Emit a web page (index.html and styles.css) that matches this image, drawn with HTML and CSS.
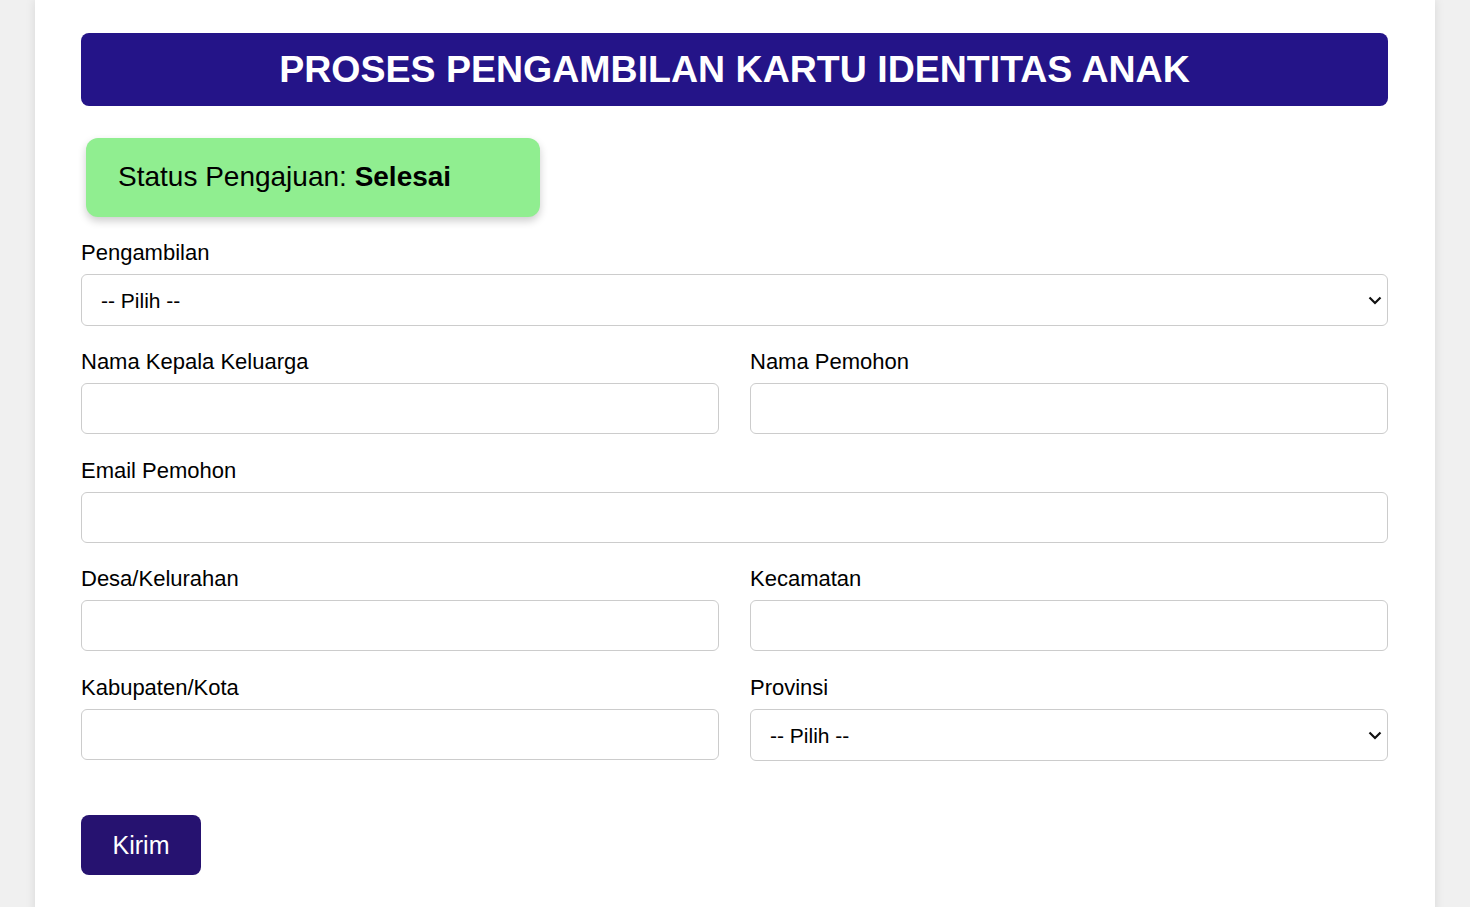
FILE: index.html
```html
<!DOCTYPE html>
<html lang="id">
<head>
<meta charset="utf-8">
<title>Proses Pengambilan Kartu Identitas Anak</title>
<link rel="stylesheet" href="styles.css">
</head>
<body>
<div class="container">
  <h1 class="title">PROSES PENGAMBILAN KARTU IDENTITAS ANAK</h1>
  <div class="status">Status Pengajuan:&nbsp;<strong>Selesai</strong></div>
  <form class="form">
    <div class="field field-first">
      <label for="pengambilan">Pengambilan</label>
      <div class="select">
        <select id="pengambilan"><option>-- Pilih --</option></select>
        <svg class="chevron" width="14" height="9" viewBox="0 0 14 9"><path d="M1.5 1.5 L7 7 L12.5 1.5" fill="none" stroke="#111" stroke-width="2.2"/></svg>
      </div>
    </div>
    <div class="row">
      <div class="field">
        <label for="kk">Nama Kepala Keluarga</label>
        <input id="kk" type="text">
      </div>
      <div class="field">
        <label for="pemohon">Nama Pemohon</label>
        <input id="pemohon" type="text">
      </div>
    </div>
    <div class="field">
      <label for="email">Email Pemohon</label>
      <input id="email" type="email">
    </div>
    <div class="row">
      <div class="field">
        <label for="desa">Desa/Kelurahan</label>
        <input id="desa" type="text">
      </div>
      <div class="field">
        <label for="kec">Kecamatan</label>
        <input id="kec" type="text">
      </div>
    </div>
    <div class="row">
      <div class="field">
        <label for="kab">Kabupaten/Kota</label>
        <input id="kab" type="text">
      </div>
      <div class="field">
        <label for="prov">Provinsi</label>
        <div class="select">
          <select id="prov"><option>-- Pilih --</option></select>
          <svg class="chevron" width="14" height="9" viewBox="0 0 14 9"><path d="M1.5 1.5 L7 7 L12.5 1.5" fill="none" stroke="#111" stroke-width="2.2"/></svg>
        </div>
      </div>
    </div>
    <button type="button" class="submit">Kirim</button>
  </form>
</div>
</body>
</html>
```
FILE: styles.css
```css
html, body {
  margin: 0;
  padding: 0;
}
body {
  background: #f0f0f0;
  font-family: "Liberation Sans", Arial, sans-serif;
  color: #000;
}
.container {
  width: 1400px;
  box-sizing: border-box;
  margin: 0 auto;
  background: #fff;
  padding: 33px 47px 40px 46px;
  box-shadow: 0 0 10px rgba(0, 0, 0, 0.1);
  min-height: 907px;
}
.title {
  margin: 0;
  background: #241488;
  color: #fff;
  font-size: 37.5px;
  font-weight: bold;
  line-height: 43px;
  padding: 15px 0;
  text-align: center;
  border-radius: 8px;
}
.status {
  margin: 32px 0 0 5px;
  width: 454px;
  height: 79px;
  box-sizing: border-box;
  padding: 0 32px 2px;
  display: flex;
  align-items: center;
  background: #90ee90;
  border-radius: 12px;
  box-shadow: 0 4px 8px rgba(0, 0, 0, 0.2);
  font-size: 28px;
}
.status strong {
  font-weight: bold;
}
.form {
  margin-top: 23px;
  display: flex;
  flex-direction: column;
}
.row {
  display: grid;
  grid-template-columns: 1fr 1fr;
  column-gap: 31px;
}
.field {
  display: flex;
  flex-direction: column;
  margin-bottom: 23.5px;
}
.field-first {
  margin-bottom: 23px;
}
.field label {
  font-size: 22px;
  line-height: 25px;
  margin-bottom: 9px;
}
.field input,
.field select {
  height: 51px;
  box-sizing: border-box;
  border: 1px solid #ccc;
  border-radius: 6px;
  background: #fff;
  font-family: "Liberation Sans", Arial, sans-serif;
  font-size: 21px;
  color: #000;
  padding: 0 16px;
  margin: 0;
  width: 100%;
}
.select {
  position: relative;
}
.field .select select {
  height: 52px;
  -webkit-appearance: none;
  appearance: none;
  padding: 1px 40px 0 19px;
  display: block;
}
.chevron {
  position: absolute;
  right: 6px;
  top: 22px;
  pointer-events: none;
}
.submit {
  align-self: flex-start;
  margin-top: 31px;
  background: #261270;
  color: #fff;
  border: none;
  border-radius: 8px;
  font-family: "Liberation Sans", Arial, sans-serif;
  font-size: 25px;
  height: 60px;
  width: 120px;
  padding: 0;
  cursor: pointer;
}
```
